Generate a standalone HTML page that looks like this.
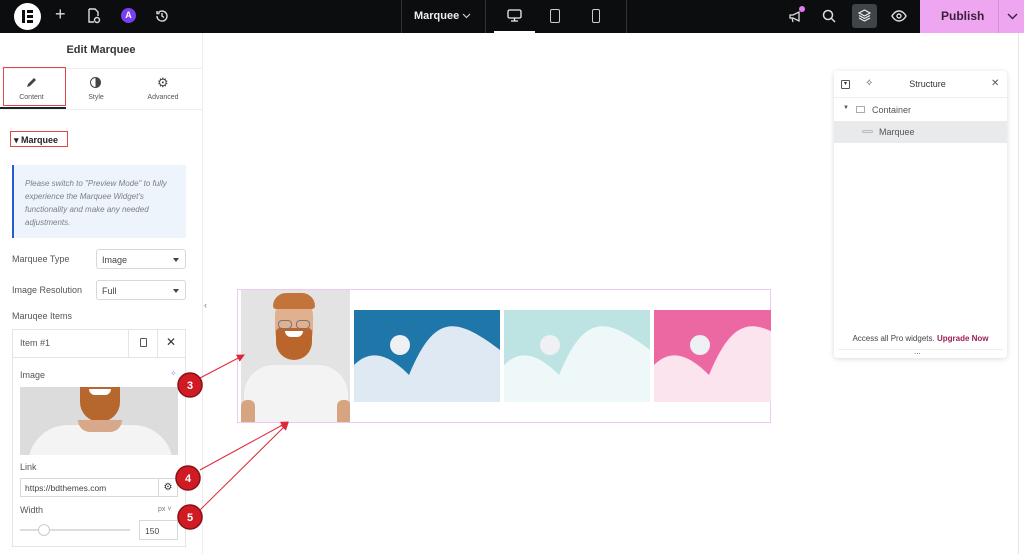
<!DOCTYPE html>
<html><head><meta charset="utf-8"><style>
*{margin:0;padding:0;box-sizing:border-box}
body{width:1024px;height:554px;overflow:hidden;background:#fff;font-family:"Liberation Sans",sans-serif;color:#333;position:relative}
.a{position:absolute}
.t{font-size:9px;color:#555}
.sel{position:absolute;border:1px solid #d5d8dc;border-radius:3px;font-size:9px;color:#444;padding:5px 0 0 5px;background:#fff}
.sel:after{content:"";position:absolute;right:6px;top:8px;border:3px solid transparent;border-top:4px solid #444}
</style></head><body>
<!-- top bar -->
<div class="a" style="left:0;top:0;width:1024px;height:33px;background:#0c0d0e"></div>
<div class="a" style="left:14px;top:3px;width:27px;height:27px;border-radius:50%;background:#fff"></div>
<div class="a" style="left:22px;top:10px;width:3px;height:13px;background:#0c0d0e"></div>
<div class="a" style="left:27px;top:10px;width:6px;height:3px;background:#0c0d0e"></div>
<div class="a" style="left:27px;top:15px;width:6px;height:3px;background:#0c0d0e"></div>
<div class="a" style="left:27px;top:20px;width:6px;height:3px;background:#0c0d0e"></div>
<div class="a" style="left:55px;top:4px;color:#ddd;font-size:18px">+</div>
<svg class="a" style="left:87px;top:8px" width="14" height="16" viewBox="0 0 14 16" fill="none" stroke="#ddd" stroke-width="1.4"><path d="M2 1h6l3 3v4M2 1v13h5"/><circle cx="10" cy="12" r="2.5"/></svg>
<div class="a" style="left:121px;top:8px;width:15px;height:15px;border-radius:50%;background:#7b3ff2;color:#fff;font-size:9px;font-weight:bold;text-align:center;line-height:15px">A</div>
<svg class="a" style="left:155px;top:9px" width="14" height="14" viewBox="0 0 14 14" fill="none" stroke="#ddd" stroke-width="1.4"><path d="M2 7a5 5 0 1 0 1.5-3.5M2 2v2.5h2.5M7 4v3l2 1.5"/></svg>
<div class="a" style="left:401px;top:0;width:1px;height:33px;background:#333"></div>
<div class="a" style="left:414px;top:10px;color:#eee;font-size:11px;font-weight:bold">Marquee</div>
<svg class="a" style="left:462px;top:13px" width="9" height="6"><path d="M1 1l3.5 3.5L8 1" stroke="#ccc" fill="none" stroke-width="1.2"/></svg>
<div class="a" style="left:485px;top:0;width:1px;height:33px;background:#333"></div>
<svg class="a" style="left:507px;top:9px" width="15" height="13" fill="none" stroke="#eee" stroke-width="1.3"><rect x="1" y="1" width="13" height="8" rx="1.5"/><path d="M4 12h7M7.5 9v3"/></svg>
<div class="a" style="left:494px;top:31px;width:41px;height:2px;background:#fff"></div>
<div class="a" style="left:550px;top:9px;width:10px;height:14px;border:1.3px solid #ccc;border-radius:2px"></div>
<div class="a" style="left:592px;top:9px;width:8px;height:14px;border:1.3px solid #ccc;border-radius:2px"></div>
<div class="a" style="left:626px;top:0;width:1px;height:33px;background:#333"></div>
<svg class="a" style="left:788px;top:9px" width="14" height="14" fill="none" stroke="#ddd" stroke-width="1.3"><path d="M2 6h3l6-3v9l-6-3H2zM4 9l1 4"/></svg>
<div class="a" style="left:799px;top:6px;width:6px;height:6px;border-radius:50%;background:#e37bf0"></div>
<svg class="a" style="left:822px;top:9px" width="14" height="14" fill="none" stroke="#ddd" stroke-width="1.5"><circle cx="6" cy="6" r="4.5"/><path d="M9.5 9.5l3.5 3.5"/></svg>
<div class="a" style="left:852px;top:4px;width:25px;height:24px;background:#3f444b;border-radius:3px"></div>
<svg class="a" style="left:858px;top:9px" width="13" height="13" fill="none" stroke="#eee" stroke-width="1.2"><path d="M6.5 1L12 4 6.5 7 1 4z M1 6.5l5.5 3 5.5-3M1 9l5.5 3 5.5-3"/></svg>
<svg class="a" style="left:891px;top:10px" width="16" height="12" fill="none" stroke="#ddd" stroke-width="1.4"><path d="M1 6s2.5-5 7-5 7 5 7 5-2.5 5-7 5-7-5-7-5z"/><circle cx="8" cy="6" r="2"/></svg>
<div class="a" style="left:920px;top:0;width:104px;height:33px;background:#eda6ef"></div>
<div class="a" style="left:941px;top:9px;font-size:12px;font-weight:bold;color:#3a1f3d">Publish</div>
<div class="a" style="left:998px;top:0;width:1px;height:33px;background:#d890dc"></div>
<svg class="a" style="left:1007px;top:13px" width="11" height="7"><path d="M1 1l4.5 4.5L10 1" stroke="#3a1f3d" fill="none" stroke-width="1.4"/></svg>
<!-- panel -->
<div class="a" style="left:202px;top:33px;width:1px;height:521px;background:#eceef0"></div>
<div class="a" style="left:0;top:44px;width:202px;text-align:center;font-size:11px;font-weight:bold;color:#333">Edit Marquee</div>
<div class="a" style="left:0;top:68px;width:202px;height:1px;background:#eee"></div>
<div class="a" style="left:0;top:109px;width:202px;height:1px;background:#eee"></div>
<div class="a" style="left:0;top:107px;width:66px;height:2px;background:#222"></div>
<div class="a" style="left:3px;top:67px;width:63px;height:39px;border:1.5px solid #e04848"></div>
<svg class="a" style="left:26px;top:77px" width="11" height="11"><path d="M1 10l1-3 6-6 2 2-6 6z" fill="#444"/></svg>
<div class="a" style="left:0;top:94px;width:63px;text-align:center;font-size:7px;color:#555">Content</div>
<div class="a" style="left:90px;top:77px;width:11px;height:11px;border-radius:50%;border:1.5px solid #444;background:linear-gradient(90deg,#fff 50%,#444 50%)"></div>
<div class="a" style="left:66px;top:94px;width:60px;text-align:center;font-size:7px;color:#555">Style</div>
<div class="a" style="left:157px;top:75px;font-size:13px;color:#444">⚙</div>
<div class="a" style="left:133px;top:94px;width:60px;text-align:center;font-size:7px;color:#555">Advanced</div>
<div class="a" style="left:10px;top:131px;width:58px;height:16px;border:1.5px solid #e04848"></div>
<div class="a" style="left:14px;top:135px;font-size:9px;font-weight:bold;color:#222">▾ Marquee</div>
<div class="a" style="left:12px;top:165px;width:174px;height:73px;background:#eef4fc;border-left:2px solid #2a5ad0"></div>
<div class="a" style="left:25px;top:177px;width:155px;font-size:8px;font-style:italic;color:#7a7f88;line-height:13px">Please switch to "Preview Mode" to fully experience the Marquee Widget's functionality and make any needed adjustments.</div>
<div class="a t" style="left:12px;top:254px">Marquee Type</div>
<div class="sel" style="left:96px;top:249px;width:90px;height:20px">Image</div>
<div class="a t" style="left:12px;top:285px">Image Resolution</div>
<div class="sel" style="left:96px;top:280px;width:90px;height:20px">Full</div>
<div class="a t" style="left:12px;top:311px">Maruqee Items</div>
<div class="a" style="left:12px;top:329px;width:174px;height:218px;border:1px solid #e2e4e7"></div>
<div class="a" style="left:12px;top:357px;width:174px;height:1px;background:#e2e4e7"></div>
<div class="a" style="left:128px;top:329px;width:1px;height:28px;background:#e2e4e7"></div>
<div class="a" style="left:157px;top:329px;width:1px;height:28px;background:#e2e4e7"></div>
<div class="a t" style="left:20px;top:338px">Item #1</div>
<div class="a" style="left:140px;top:338px;width:7px;height:9px;border:1px solid #555;border-radius:1px"></div>
<div class="a" style="left:166px;top:335px;font-size:12px;color:#333">✕</div>
<div class="a t" style="left:20px;top:370px">Image</div>
<div class="a" style="left:170px;top:369px;font-size:8px;color:#b070e0">✧</div>
<div class="a" style="left:20px;top:387px;width:158px;height:68px;background:#dcdcdc;overflow:hidden">
<div class="a" style="left:60px;top:-10px;width:40px;height:45px;border-radius:0 0 20px 20px;background:#b5672e"></div>
<div class="a" style="left:69px;top:2px;width:22px;height:6px;border-radius:0 0 10px 10px;background:#fff"></div>
<div class="a" style="left:8px;top:38px;width:145px;height:50px;border-radius:40px 40px 0 0;background:#f4f4f4"></div>
<div class="a" style="left:58px;top:33px;width:44px;height:12px;border-radius:0 0 22px 22px;background:#d8a88a"></div>
</div>
<div class="a t" style="left:20px;top:462px">Link</div>
<div class="a" style="left:20px;top:478px;width:139px;height:19px;border:1px solid #d5d8dc;font-size:8.5px;color:#444;padding:4px 0 0 4px">https://bdthemes.com</div>
<div class="a" style="left:158px;top:478px;width:20px;height:19px;border:1px solid #d5d8dc;font-size:10px;text-align:center;line-height:17px;color:#333">⚙</div>
<div class="a t" style="left:20px;top:505px">Width</div>
<div class="a" style="left:158px;top:506px;font-size:7px;color:#777">px ˅</div>
<div class="a" style="left:20px;top:529px;width:110px;height:2px;background:#ddd"></div>
<div class="a" style="left:38px;top:524px;width:12px;height:12px;border-radius:50%;background:#fff;border:1px solid #ccc"></div>
<div class="a" style="left:139px;top:520px;width:39px;height:20px;border:1px solid #d5d8dc;font-size:8.5px;color:#444;padding:5px 0 0 5px">150</div>
<div class="a" style="left:204px;top:300px;font-size:9px;color:#777">‹</div>
<!-- canvas -->
<div class="a" style="left:237px;top:289px;width:534px;height:134px;border:1.5px solid #efc8f2"></div>
<div class="a" style="left:241px;top:290px;width:109px;height:132px;background:#e3e3e3;overflow:hidden">
<div class="a" style="left:3px;top:75px;width:104px;height:70px;border-radius:30px 30px 0 0;background:#f3f3f3"></div>
<div class="a" style="left:0px;top:110px;width:14px;height:30px;background:#d7a482;border-radius:6px"></div>
<div class="a" style="left:96px;top:110px;width:14px;height:30px;background:#d7a482;border-radius:6px"></div>
<div class="a" style="left:34px;top:8px;width:38px;height:52px;border-radius:18px 18px 20px 20px;background:#e0b08f"></div>
<div class="a" style="left:32px;top:3px;width:42px;height:16px;border-radius:18px 18px 4px 4px;background:#c2743a"></div>
<div class="a" style="left:35px;top:38px;width:36px;height:32px;border-radius:4px 4px 18px 18px;background:#b9652c"></div>
<div class="a" style="left:44px;top:41px;width:18px;height:6px;border-radius:0 0 9px 9px;background:#fff"></div>
<div class="a" style="left:37px;top:30px;width:14px;height:9px;border:1px solid #777;border-radius:4px"></div>
<div class="a" style="left:55px;top:30px;width:14px;height:9px;border:1px solid #777;border-radius:4px"></div>
</div>
<svg class="a" style="left:354px;top:310px" width="417" height="92">
<g><rect width="146" height="92" fill="#1e76a9"/><path d="M0 55c20-20 40-5 55 10 25-60 45-60 91-25v52H0z" fill="#dfe9f4"/><circle cx="46" cy="35" r="10" fill="#eef0f4"/></g>
<g transform="translate(150,0)"><rect width="146" height="92" fill="#bde3e2"/><path d="M0 55c20-20 40-5 55 10 25-60 45-60 91-25v52H0z" fill="#eef8f9"/><circle cx="46" cy="35" r="10" fill="#eef0f4"/></g>
<g transform="translate(300,0)"><rect width="117" height="92" fill="#ec68a2"/><path d="M0 55c20-20 40-5 55 10 25-60 45-60 91-25v52H0z" fill="#fce4ef"/><circle cx="46" cy="35" r="10" fill="#eef0f4"/></g>
</svg>
<!-- structure -->
<div class="a" style="left:834px;top:71px;width:173px;height:287px;background:#fff;border-radius:4px;box-shadow:0 1px 6px rgba(0,0,0,.15)"></div>
<div class="a" style="left:841px;top:80px;width:9px;height:9px;border:1px solid #555;border-radius:1px;font-size:6px;text-align:center;line-height:7px">▾</div>
<div class="a" style="left:865px;top:78px;font-size:10px;color:#555">✧</div>
<div class="a" style="left:834px;top:79px;width:187px;text-align:center;font-size:9px;color:#333">Structure</div>
<div class="a" style="left:991px;top:78px;font-size:10px;color:#555">✕</div>
<div class="a" style="left:834px;top:97px;width:173px;height:1px;background:#eee"></div>
<div class="a" style="left:843px;top:105px;font-size:6px;color:#555">▼</div>
<div class="a" style="left:856px;top:106px;width:9px;height:7px;border:1px solid #aaa"></div>
<div class="a" style="left:872px;top:105px;font-size:9px;color:#555">Container</div>
<div class="a" style="left:834px;top:121px;width:173px;height:22px;background:#e9eaeb"></div>
<div class="a" style="left:862px;top:130px;width:11px;height:3px;border:1px solid #bbb;border-radius:2px"></div>
<div class="a" style="left:879px;top:127px;font-size:9px;color:#555">Marquee</div>
<div class="a" style="left:834px;top:334px;width:173px;text-align:center;font-size:8px;color:#444">Access all Pro widgets. <b style="color:#9c1f5a">Upgrade Now</b></div>
<div class="a" style="left:838px;top:349px;width:165px;height:1px;background:#eee"></div>
<div class="a" style="left:914px;top:347px;font-size:8px;color:#555">...</div>
<div class="a" style="left:1018px;top:33px;width:1px;height:521px;background:#e5e5e5"></div>
<!-- annotations -->
<svg class="a" style="left:0;top:0" width="1024" height="554">
<defs><marker id="m" markerWidth="8" markerHeight="8" refX="7" refY="4" orient="auto"><path d="M0 0L8 4 0 8z" fill="#e0283a"/></marker></defs>
<g stroke="#e0283a" stroke-width="1" fill="none" marker-end="url(#m)">
<line x1="200" y1="378" x2="244" y2="355"/>
<line x1="200" y1="470" x2="288" y2="422"/>
<line x1="200" y1="510" x2="288" y2="423"/>
</g>
<g font-family="Liberation Sans" font-weight="bold" font-size="11" fill="#fff" text-anchor="middle">
<circle cx="190" cy="385" r="12" fill="#d11b24" stroke="#8a1016" stroke-width="1.5"/><text x="190" y="389">3</text>
<circle cx="188" cy="478" r="12" fill="#d11b24" stroke="#8a1016" stroke-width="1.5"/><text x="188" y="482">4</text>
<circle cx="190" cy="517" r="12" fill="#d11b24" stroke="#8a1016" stroke-width="1.5"/><text x="190" y="521">5</text>
</g></svg>
</body></html>
